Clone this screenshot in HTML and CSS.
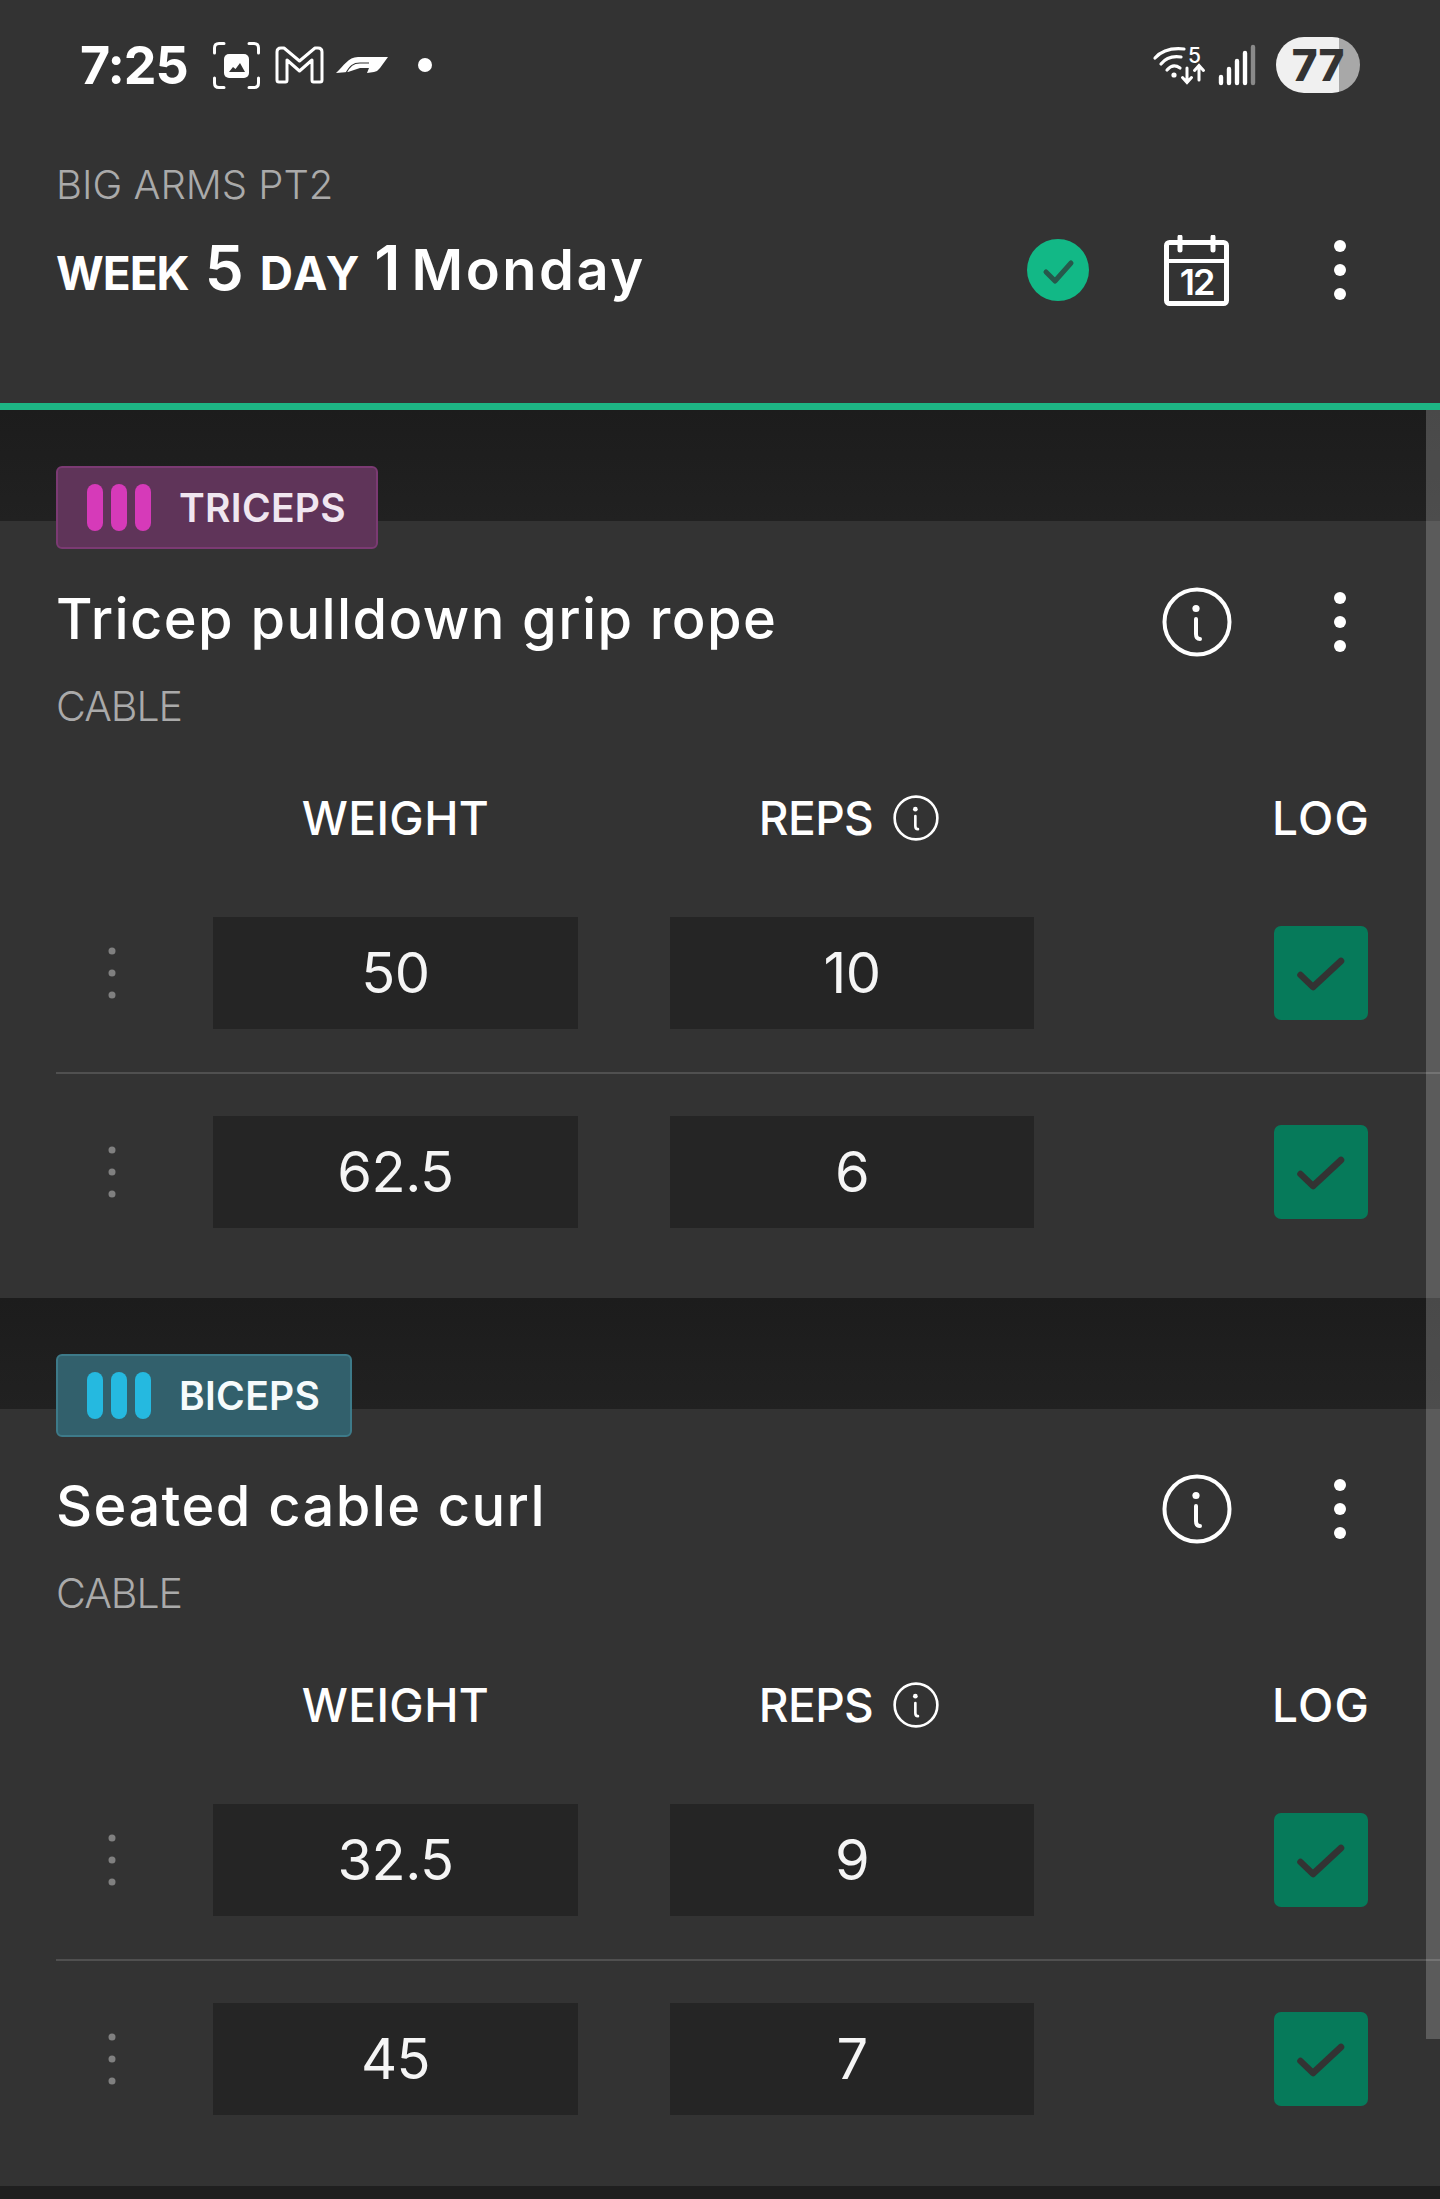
FILE: index.html
```html
<!DOCTYPE html>
<html lang="en">
<head>
    <meta charset="UTF-8">
    <meta name="viewport" content="width=device-width, initial-scale=1.0">
    <title>Workout</title>
    <link rel="stylesheet" href="styles.css">
</head>
<body>
<svg class="defs" width="0" height="0">
    <symbol id="dots" viewBox="0 0 12 60">
        <circle cx="6" cy="6" r="6"/><circle cx="6" cy="30" r="6"/><circle cx="6" cy="54" r="6"/>
    </symbol>
    <symbol id="grip" viewBox="0 0 8 52">
        <circle cx="4" cy="4" r="3.5"/><circle cx="4" cy="26" r="3.5"/><circle cx="4" cy="48" r="3.5"/>
    </symbol>
    <symbol id="info" viewBox="0 0 70 70">
        <circle cx="35" cy="35" r="32.5" fill="none" stroke="currentColor" stroke-width="4"/>
        <circle cx="34" cy="21.5" r="3.6" fill="currentColor"/>
        <path d="M34 32 V47 Q34 52 38 52" fill="none" stroke="currentColor" stroke-width="4" stroke-linecap="round"/>
    </symbol>
    <symbol id="tick" viewBox="0 0 48 36">
        <path d="M3.5 18 L16 30 L44 4" fill="none" stroke="#333" stroke-width="6.500" stroke-linecap="round" stroke-linejoin="round"/>
    </symbol>
</svg>

<!-- status bar -->
<div class="status">
    <span class="clock">7:25</span>
    <svg class="ico-shot" width="47" height="47" viewBox="0 0 47 47">
        <path d="M1.5 11 V6 Q1.5 1.5 6 1.5 H11 M36 1.5 H41 Q45.5 1.5 45.5 6 V11 M45.5 36 V41 Q45.5 45.5 41 45.5 H36 M11 45.5 H6 Q1.5 45.5 1.5 41 V36" fill="none" stroke="#fff" stroke-width="3" stroke-linecap="round"/>
        <rect x="11" y="12" width="25" height="24" rx="5" fill="#fff"/>
        <path d="M16 30 L20 25 L22.5 27 L27 21 L32 30 Z" fill="#333"/>
    </svg>
    <svg class="ico-mail" width="49" height="38" viewBox="0 0 49 38">
        <path d="M2 6 Q2 2 6 2 H9 L24.5 15 L40 2 H43 Q47 2 47 6 V34 Q47 36 45 36 H38.5 Q37 36 37 34 V14 L24.5 25 L12 14 V34 Q12 36 10.5 36 H4 Q2 36 2 34 Z" fill="none" stroke="#fff" stroke-width="3" stroke-linejoin="round"/>
    </svg>
    <svg class="ico-f1" width="52" height="16" viewBox="0 0 52 16">
        <path d="M0 16 C8 9 12 0 22 0 H52 L44 11 Q42 14 38 15 L31 16 L33 11 H24 L12 15 Z" fill="#fff"/>
        <path d="M10 16 C14 9 17 6 24 6 H33" fill="none" stroke="#333" stroke-width="1.200"/>
    </svg>
    <span class="notif-dot"></span>
    <div class="status-right">
        <svg class="ico-wifi" width="53" height="40" viewBox="0 0 53 40">
            <path d="M2 13 Q12 2 31 4 M8 19 Q15 10 28 12 M14 25 Q20 18 27 23" fill="none" stroke="#fff" stroke-width="3.200" stroke-linecap="round"/>
            <circle cx="21" cy="30" r="2.600" fill="#fff"/>
            <text class="wifi-five" x="35" y="18">5</text>
            <path d="M34 23 V37 M29.500 32.500 L34 37.500 L38.500 32.500 M46 35 V21 M41.500 25.500 L46 20.500 L50.500 25.500" fill="none" stroke="#fff" stroke-width="3" stroke-linecap="round"/>
        </svg>
        <svg class="ico-signal" width="38" height="42" viewBox="0 0 38 42">
            <path d="M3 39 V33 M11 39 V25 M19 39 V17 M27 39 V9" stroke="#fff" stroke-width="4.400" stroke-linecap="round"/>
            <path d="M35 39 V3" stroke="#8a8a8a" stroke-width="4.400" stroke-linecap="round"/>
        </svg>
        <div class="battery">77</div>
    </div>
</div>

<!-- workout header -->
<header class="top">
    <div class="plan">BIG ARMS PT2</div>
    <div class="top-row">
        <h1 class="day">
            <span class="day-lbl">WEEK</span>
            <span class="day-num">5</span>
            <span class="day-lbl">DAY</span>
            <span class="day-num">1</span>
            <span class="day-name">Monday</span>
        </h1>
        <svg class="done" width="62" height="62" viewBox="0 0 62 62">
            <circle cx="31" cy="31" r="31" fill="#12b886"/>
            <path d="M19 33 L28 42 L44 24" fill="none" stroke="#27584b" stroke-width="5" stroke-linecap="round" stroke-linejoin="round"/>
        </svg>
        <svg class="cal" width="65" height="71" viewBox="0 0 65 71">
            <rect x="2.500" y="7.500" width="60" height="61" rx="3" fill="none" stroke="#fff" stroke-width="5"/>
            <path d="M2 26 H63" stroke="#fff" stroke-width="4"/>
            <path d="M16 2 V15 M49 2 V15" stroke="#fff" stroke-width="5" stroke-linecap="round"/>
            <text class="cal-num" x="32.500" y="60">12</text>
        </svg>
        <svg class="more" width="12" height="60"><use href="#dots" fill="#fff"/></svg>
    </div>
</header>

<main>
    <div class="band"></div>
    <section class="card">
        <div class="tag tag-tri">
            <span class="bars"><i></i><i></i><i></i></span>
            <span>TRICEPS</span>
        </div>
        <div class="ex-row">
            <h2 class="ex-name">Tricep pulldown grip rope</h2>
            <svg class="ex-info" width="70" height="70"><use href="#info"/></svg>
            <svg class="more" width="12" height="60"><use href="#dots" fill="#fff"/></svg>
        </div>
        <div class="ex-type">CABLE</div>
        <div class="heads">
            <div class="head-w">WEIGHT</div>
            <div class="head-r"><span>REPS</span> <svg width="46" height="46"><use href="#info"/></svg></div>
            <div class="head-l">LOG</div>
        </div>
        <div class="set">
            <svg class="grip" width="8" height="52"><use href="#grip"/></svg>
            <div class="val">50</div>
            <div class="val">10</div>
            <div class="log"><svg width="48" height="36"><use href="#tick"/></svg></div>
        </div>
        <div class="set">
            <svg class="grip" width="8" height="52"><use href="#grip"/></svg>
            <div class="val">62.5</div>
            <div class="val">6</div>
            <div class="log"><svg width="48" height="36"><use href="#tick"/></svg></div>
        </div>
    </section>

    <div class="band"></div>
    <section class="card">
        <div class="tag tag-bi">
            <span class="bars"><i></i><i></i><i></i></span>
            <span>BICEPS</span>
        </div>
        <div class="ex-row">
            <h2 class="ex-name">Seated cable curl</h2>
            <svg class="ex-info" width="70" height="70"><use href="#info"/></svg>
            <svg class="more" width="12" height="60"><use href="#dots" fill="#fff"/></svg>
        </div>
        <div class="ex-type">CABLE</div>
        <div class="heads">
            <div class="head-w">WEIGHT</div>
            <div class="head-r"><span>REPS</span> <svg width="46" height="46"><use href="#info"/></svg></div>
            <div class="head-l">LOG</div>
        </div>
        <div class="set">
            <svg class="grip" width="8" height="52"><use href="#grip"/></svg>
            <div class="val">32.5</div>
            <div class="val">9</div>
            <div class="log"><svg width="48" height="36"><use href="#tick"/></svg></div>
        </div>
        <div class="set">
            <svg class="grip" width="8" height="52"><use href="#grip"/></svg>
            <div class="val">45</div>
            <div class="val">7</div>
            <div class="log"><svg width="48" height="36"><use href="#tick"/></svg></div>
        </div>
    </section>
</main>

<div class="scrollbar"></div>
</body>
</html>
```

FILE: styles.css
```css
* {
    box-sizing: border-box;
}

html, body {
    margin: 0;
    padding: 0;
}

body {
    position: relative;
    height: 2199px;
    overflow: hidden;
    background-color: #1f1f1f;
    color: #fff;
    font-family: Inter, "Liberation Sans", sans-serif;
}

.defs {
    position: absolute;
}

svg {
    display: block;
    flex: none;
}

/* Status bar */
.status {
    display: flex;
    align-items: center;
    height: 130px;
    padding: 0 80px 0 80px;
    background-color: #333;
}

.clock {
    width: 133px;
    font-size: 52px;
    font-weight: 700;
    letter-spacing: -1px;
}

.ico-mail {
    margin-left: 15px;
}

.ico-f1 {
    margin-left: 12px;
}

.notif-dot {
    width: 14px;
    height: 14px;
    margin-left: 30px;
    border-radius: 50%;
    background-color: #fff;
}

.status-right {
    display: flex;
    align-items: center;
    margin-left: auto;
}

.ico-wifi {
    overflow: visible;
}

.wifi-five {
    fill: #fff;
    font-size: 21px;
    font-weight: 500;
}

.ico-signal {
    margin-left: 12px;
}

.battery {
    width: 84px;
    height: 56px;
    margin-left: 20px;
    border-radius: 28px;
    background: linear-gradient(to right, #f0f0f0 75%, #a8a8a8 75%);
    color: #333;
    font-size: 44px;
    font-weight: 800;
    line-height: 56px;
    text-align: center;
}

/* Workout header */
.top {
    height: 280px;
    padding: 25px 94px 0 56px;
    border-bottom: 7px solid #1db584;
    background-color: #333;
}

.plan {
    color: #aaa;
    font-size: 40px;
    font-weight: 300;
    line-height: 60px;
}

.top-row {
    display: flex;
    align-items: center;
    height: 70px;
    margin-top: 20px;
}

.day {
    display: flex;
    align-items: baseline;
    gap: 16px;
    margin: 0 auto 0 0;
    font-weight: 700;
    line-height: 70px;
}

.day-lbl {
    font-size: 46px;
    letter-spacing: -1px;
}

.day-num + .day-lbl {
    margin-right: -3px;
    letter-spacing: 2px;
}

.day-num {
    font-size: 62px;
    font-weight: 600;
}

.day-name {
    margin-left: -5px;
    font-size: 56px;
    font-weight: 600;
    letter-spacing: 2.5px;
}

.cal {
    margin-left: 75px;
}

.cal-num {
    fill: #fff;
    font-size: 36px;
    font-weight: 600;
    letter-spacing: -2px;
    text-anchor: middle;
}

.top-row .more {
    margin-left: 105px;
}

/* Sections */
.band {
    height: 111px;
    background: linear-gradient(to bottom, #1c1c1c, #212121);
}

.card {
    height: 777px;
    padding: 0 0 0 56px;
    background-color: #333;
}

.tag {
    display: inline-flex;
    align-items: center;
    gap: 28px;
    height: 83px;
    margin-top: -55px;
    padding: 0 30px 0 29px;
    border: 2px solid;
    border-radius: 6px;
    font-size: 39px;
    font-weight: 600;
    letter-spacing: 0.3px;
    vertical-align: top;
}

.tag-tri {
    border-color: #7b3a73;
    background-color: #5f3459;
    color: #f0e6f0;
}

.tag-bi {
    border-color: #3d7a89;
    background-color: #32606c;
    color: #f6fbfc;
}

.bars {
    display: flex;
    gap: 8px;
}

.bars i {
    width: 16px;
    height: 47px;
    border-radius: 8px;
}

.tag-tri .bars i {
    background-color: #d63ab9;
}

.tag-bi .bars i {
    background-color: #25b9e0;
}

.ex-row {
    display: flex;
    align-items: center;
    height: 70px;
    margin-top: 35px;
    padding-right: 94px;
}

.tag-bi + .ex-row {
    margin-top: 34px;
}

.ex-name {
    margin: 0 auto 0 0;
    font-size: 56px;
    font-weight: 500;
    letter-spacing: 1.4px;
    line-height: 70px;
}

.ex-row .more {
    margin-left: 102px;
    margin-top: 6px;
}

.ex-info {
    margin-top: 6px;
    color: #fff;
}

.ex-type {
    margin-top: 22px;
    color: #aaa;
    font-size: 41px;
    font-weight: 300;
    letter-spacing: -1px;
    line-height: 60px;
}

.heads {
    display: flex;
    align-items: center;
    height: 60px;
    margin-top: 52px;
    padding-left: 157px;
    padding-right: 72px;
    font-size: 46px;
    font-weight: 500;
}

.head-w {
    width: 365px;
    letter-spacing: 0.4px;
    text-align: center;
}

.head-r {
    display: flex;
    align-items: center;
    justify-content: center;
    gap: 20px;
    width: 364px;
    margin-left: 92px;
    padding-right: 6px;
    letter-spacing: -0.6px;
}

.head-l {
    margin-left: auto;
    margin-right: -2px;
    letter-spacing: 1.2px;
}

.set {
    display: flex;
    align-items: center;
    padding: 42px 72px 43px 52px;
}

.set + .set {
    border-top: 2px solid #505050;
}

.heads + .set {
    padding-top: 69px;
}

.grip {
    margin-right: 97px;
    fill: #808080;
}

.val {
    width: 365px;
    height: 112px;
    background-color: #252525;
    color: #f5f5f5;
    font-size: 56px;
    letter-spacing: -0.5px;
    line-height: 112px;
    text-align: center;
}

.val + .val {
    width: 364px;
    margin-left: 92px;
}

.log {
    display: flex;
    align-items: center;
    justify-content: center;
    width: 94px;
    height: 94px;
    margin-left: auto;
    padding-top: 4px;
    border-radius: 7px;
    background-color: #067a5a;
}

/* Scrollbar sits over the page */
.scrollbar {
    position: absolute;
    top: 410px;
    right: 0;
    width: 14px;
    height: 1629px;
    background-color: rgba(255, 255, 255, 0.2);
}
```
